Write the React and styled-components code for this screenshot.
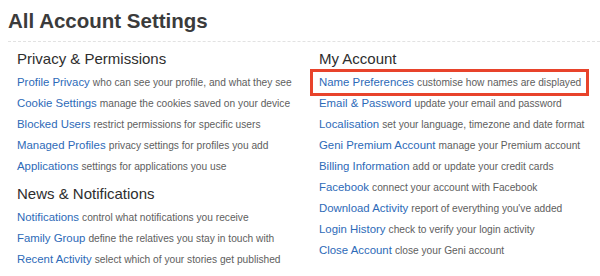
import React from 'react'
import styled, { createGlobalStyle } from 'styled-components'

const GlobalStyle = createGlobalStyle`
  body {
    margin: 0;
    background: #fff;
    font-family: "Liberation Sans", Arial, Helvetica, sans-serif;
  }
`

const Page = styled.div`
  padding: 8px 0 0 8px;
`

const Title = styled.h1`
  margin: 0;
  font-size: 20.5px;
  line-height: 26px;
  font-weight: bold;
  color: #3b3b3b;
`

const Divider = styled.div`
  margin-top: 7px;
  border-top: 1px dashed #e2e2e2;
`

const Columns = styled.div`
  display: grid;
  grid-template-columns: 302px 1fr;
  padding-top: 7px;
`

const Column = styled.div`
  padding-left: 3px;
`

const Heading = styled.h2`
  margin: ${(props) => (props.$first ? '0' : '7px')} 0 3px 0;
  padding-left: 6px;
  font-size: 15px;
  line-height: 20px;
  font-weight: normal;
  color: #2e2e2e;
`

const Row = styled.div`
  width: fit-content;
  padding: 0 5px 0 6px;
  height: 21px;
  font-size: 11px;
  line-height: 21px;
  white-space: nowrap;
  box-shadow: ${(props) => (props.$highlight ? '0 0 0 3px #e8432b' : 'none')};
`

const Link = styled.a`
  color: #2d6ab8;
  text-decoration: none;
  font-size: 11.4px;
`

const Desc = styled.span`
  color: #5e5e5e;
  font-size: 10.2px;
`

const left = [
  {
    title: 'Privacy & Permissions',
    items: [
      ['Profile Privacy', 'who can see your profile, and what they see'],
      ['Cookie Settings', 'manage the cookies saved on your device'],
      ['Blocked Users', 'restrict permissions for specific users'],
      ['Managed Profiles', 'privacy settings for profiles you add'],
      ['Applications', 'settings for applications you use'],
    ],
  },
  {
    title: 'News & Notifications',
    items: [
      ['Notifications', 'control what notifications you receive'],
      ['Family Group', 'define the relatives you stay in touch with'],
      ['Recent Activity', 'select which of your stories get published'],
    ],
  },
]

const right = [
  {
    title: 'My Account',
    items: [
      ['Name Preferences', 'customise how names are displayed', true],
      ['Email & Password', 'update your email and password'],
      ['Localisation', 'set your language, timezone and date format'],
      ['Geni Premium Account', 'manage your Premium account'],
      ['Billing Information', 'add or update your credit cards'],
      ['Facebook', 'connect your account with Facebook'],
      ['Download Activity', "report of everything you've added"],
      ['Login History', 'check to verify your login activity'],
      ['Close Account', 'close your Geni account'],
    ],
  },
]

const Sections = ({ sections }) => (
  <Column>
    {sections.map((section, i) => (
      <div key={section.title}>
        <Heading $first={i === 0}>{section.title}</Heading>
        {section.items.map(([name, desc, hl]) => (
          <Row key={name} $highlight={hl}>
            <Link href="#">{name}</Link> <Desc>{desc}</Desc>
          </Row>
        ))}
      </div>
    ))}
  </Column>
)

export default function App() {
  return (
    <Page>
      <GlobalStyle />
      <Title>All Account Settings</Title>
      <Divider />
      <Columns>
        <Sections sections={left} />
        <Sections sections={right} />
      </Columns>
    </Page>
  )
}
